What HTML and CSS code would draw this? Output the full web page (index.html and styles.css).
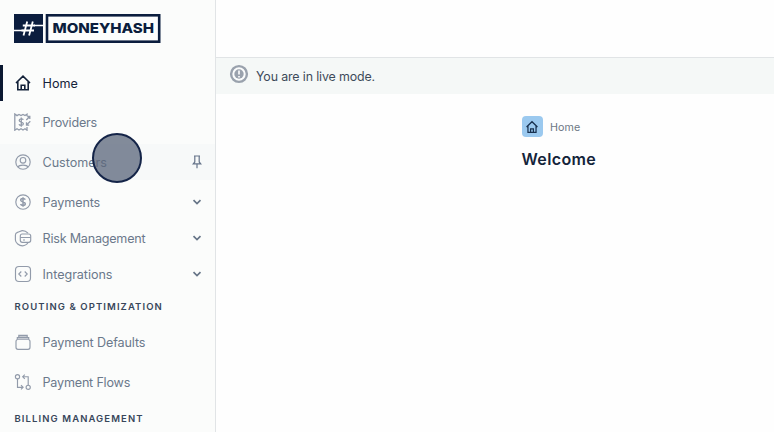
FILE: index.html
```
<!DOCTYPE html>
<html lang="en">
<head>
<meta charset="utf-8">
<title>MoneyHash</title>
<link rel="stylesheet" href="styles.css">
</head>
<body>
<div class="app">
  <aside class="sidebar">
    <svg class="logo" viewBox="0 0 147 29" role="img" aria-label="MoneyHash">
      <rect width="29" height="29" fill="#0b1d3e"/>
      <path d="M0 16.5H10M20 11.5H29" stroke="#fff" stroke-width="1.3"/>
      <path d="M13.2 7.5L9.5 21.5M18.8 7.5L15.1 21.5M8.8 11.5H21M7.5 16.5H20" stroke="#fff" stroke-width="1.8" fill="none"/>
      <rect x="33" y="1.3" width="112.2" height="26.4" fill="#fcfdfd" stroke="#0b1d3e" stroke-width="2.6"/>
      <text class="wordmark" x="38.5" y="19.4" textLength="101.5" lengthAdjust="spacingAndGlyphs">MONEYHASH</text>
    </svg>
    <nav class="nav">
      <a class="item active">
        <svg class="icon" viewBox="0 0 18 18"><path d="M2 9L9 2.2L16 9M3.8 7.5V15.8H14.2V7.5M7.2 15.8V11.3H10.8V15.8"/></svg>
        <span class="label home">Home</span>
      </a>
      <a class="item spaced">
        <svg class="icon receipt" viewBox="0 0 18 18"><path d="M13 3.2V1.2L11 2.6L9 1.4L7 2.6L5 1.4L3 2.6L.8 1V17.2L3 15.8L5 17L7 15.8L9 17L11 15.8L13 17.2V14M9.3 6.8C8.6 5.3 5.2 5.5 5.2 7.4C5.2 9.5 9.4 8.6 9.4 10.8C9.4 12.8 5.7 12.8 5 11.2M7.3 4.5V13.7M12.3 7L15.5 3.8M13.3 3.5H15.8V6M16.3 8.3L12.7 11.9M12.5 9.3V12.1H15.2"/></svg>
        <span class="label providers">Providers</span>
      </a>
      <a class="item spaced hovered">
        <svg class="icon" viewBox="0 0 18 18"><circle cx="9" cy="9" r="7.2"/><circle cx="9" cy="7.3" r="2.8"/><path d="M4 14C5.2 11.4 12.8 11.4 14 14"/></svg>
        <span class="label customers">Customers</span>
        <svg class="pin" viewBox="0 0 10 14"><path d="M2 1H8M2.8 1V7L1.3 8.8H8.7L7.2 7V1M5 8.8V13.2"/></svg>
      </a>
      <a class="item spaced">
        <svg class="icon" viewBox="0 0 18 18"><circle cx="9" cy="9" r="7.2"/><path d="M11.3 6.7C10.4 5 6.6 5.2 6.7 7.3C6.8 9.4 11.3 8.4 11.3 10.8C11.3 12.9 7.4 12.9 6.5 11.2M9 4.2V13.8" stroke-width="1.5"/></svg>
        <span class="label payments">Payments</span>
        <svg class="chevron" viewBox="0 0 10 10"><path d="M1.5 3.2L5 6.6L8.5 3.2"/></svg>
      </a>
      <a class="item">
        <svg class="icon" viewBox="0 0 18 18"><path d="M14 4.2C12.5 2.6 10.5 1.6 8.5 1.6C7 1.6 5.5 2.8 3.5 3.4C2.2 3.8 1.4 4.6 1.4 6V11C1.6 14 5 16.8 8.5 16.8C11 16.8 13 15.3 14.3 13.3"/><rect x="6.3" y="5" width="10.4" height="8.3" rx="2"/><path d="M6.3 8.5H16.7M9 11H11"/></svg>
        <span class="label risk">Risk Management</span>
        <svg class="chevron" viewBox="0 0 10 10"><path d="M1.5 3.2L5 6.6L8.5 3.2"/></svg>
      </a>
      <a class="item">
        <svg class="icon" viewBox="0 0 18 18"><rect x="1.5" y="1.5" width="15" height="15" rx="3.5"/><path d="M7.3 6.5L4.8 9L7.3 11.5M10.7 6.5L13.2 9L10.7 11.5"/></svg>
        <span class="label integrations">Integrations</span>
        <svg class="chevron" viewBox="0 0 10 10"><path d="M1.5 3.2L5 6.6L8.5 3.2"/></svg>
      </a>
      <h2 class="group">ROUTING &amp; OPTIMIZATION</h2>
      <a class="item spaced">
        <svg class="icon" viewBox="0 0 18 18"><rect x="2" y="6.5" width="14" height="9.8" rx="2"/><path fill="#c5cad1" d="M3.3 6.5V4.5H14.7V6.5M4.8 4.5V2.3H13.2V4.5"/></svg>
        <span class="label defaults">Payment Defaults</span>
      </a>
      <a class="item spaced">
        <svg class="icon" viewBox="0 0 18 18"><circle cx="3.5" cy="3.7" r="2.1"/><circle cx="14.2" cy="14.3" r="2.1"/><path d="M3.5 5.8V14.3H9M7 12.2L9.1 14.3L7 16.4M14.2 12.2V3.7H8.7M10.8 1.6L8.7 3.7L10.8 5.8"/></svg>
        <span class="label flows">Payment Flows</span>
      </a>
      <h2 class="group billing">BILLING MANAGEMENT</h2>
    </nav>
    <div class="pointer"></div>
  </aside>
  <main class="main">
    <header class="topbar"></header>
    <div class="banner">
      <svg class="alert" viewBox="0 0 20 20"><circle cx="10" cy="10" r="7.9" fill="#fbfcfc" stroke="#9aa2ad" stroke-width="2.4"/><circle cx="10" cy="10" r="4.7" fill="#9aa2ad"/><path d="M10 6.5V10.6M10 12V13.4" stroke="#fff" stroke-width="1.6"/></svg>
      <span class="notice">You are in live mode.</span>
    </div>
    <section class="content">
      <div class="crumb">
        <span class="badge"><svg class="house" viewBox="0 0 18 18"><path d="M2 9L9 2.2L16 9M3.8 7.5V15.8H14.2V7.5M7.2 15.8V11.3H10.8V15.8"/></svg></span>
        <span class="crumb-text">Home</span>
      </div>
      <h1 class="title">Welcome</h1>
    </section>
  </main>
</div>
</body>
</html>
```
FILE: styles.css
```
* { box-sizing: border-box; }
body { margin: 0; background: #fefefe; font-family: "Inter", sans-serif; color: #6b798b; }
.app { display: flex; width: 774px; height: 432px; overflow: hidden; }
.sidebar { position: relative; width: 216px; flex: none; background: #fbfcfb; border-right: 1px solid #e1e4e6; }
.logo { display: block; width: 147px; height: 29px; margin: 14px 0 22px 14px; }
.wordmark { font-family: "Inter", sans-serif; font-size: 13.8px; font-weight: 800; fill: #0b1d3e; }
.item { display: flex; align-items: center; height: 36px; padding: 0 13px 0 14px; }
.active { border-left: 3px solid #0b1831; padding-left: 11px; color: #14223a; margin-bottom: 3px; }
.active + .spaced { margin-top: 0; }
.spaced { margin-top: 4px; }
.hovered { background: #f7f9f9; }
.icon { width: 18px; height: 18px; margin-right: 10.5px; fill: none; stroke: #929baa; stroke-width: 1.15; flex: none; }
.receipt { stroke-width: 1.3; }
.active .icon { stroke: #14223a; stroke-width: 1.6; }
.label { padding-top: 2px; font-size: 12.6px; line-height: 18px; white-space: nowrap; }
.home { letter-spacing: 0.05px; }
.providers { letter-spacing: -0.22px; }
.customers { letter-spacing: -0.03px; }
.payments { letter-spacing: -0.1px; }
.risk { letter-spacing: -0.22px; }
.integrations { letter-spacing: -0.05px; }
.defaults { letter-spacing: -0.12px; }
.flows { letter-spacing: -0.2px; }
.chevron { width: 10px; height: 10px; margin-left: auto; fill: none; stroke: #667487; stroke-width: 1.7; }
.pin { width: 10px; height: 14px; margin-left: auto; fill: none; stroke: #66748a; stroke-width: 1.2; }
.group { margin: 0; height: 28px; padding-left: 14.5px; font-size: 9.5px; line-height: 29px; font-weight: 600; letter-spacing: 1.1px; color: #38465a; white-space: nowrap; }
.billing { margin-top: 4px; }
.pointer { position: absolute; left: 92px; top: 133px; width: 50px; height: 50px; border-radius: 50%; border: 2px solid #142448; background: rgba(92, 102, 124, 0.76); }
.main { flex: 1; background: #fefefe; }
.topbar { height: 58px; border-bottom: 1px solid #e1e4e6; }
.banner { display: flex; align-items: center; height: 36px; padding-left: 13px; background: #f5f8f7; }
.alert { width: 20px; height: 20px; margin: -4px 7px 0 0; }
.notice { font-size: 12.4px; letter-spacing: -0.13px; color: #3d4b5a; }
.content { padding: 22px 0 0 305.5px; }
.crumb { display: flex; align-items: center; height: 21px; }
.badge { display: flex; align-items: center; justify-content: center; width: 21px; height: 21px; border-radius: 4px; background: #9bc9ef; margin-right: 7.5px; }
.house { width: 14px; height: 14px; fill: none; stroke: #17304f; stroke-width: 1.6; }
.crumb-text { padding-top: 1px; font-size: 10.7px; letter-spacing: 0.1px; color: #6d7785; }
.title { margin: 11px 0 0; font-size: 16px; line-height: 22px; font-weight: 600; letter-spacing: 0.35px; color: #14243a; }
```
